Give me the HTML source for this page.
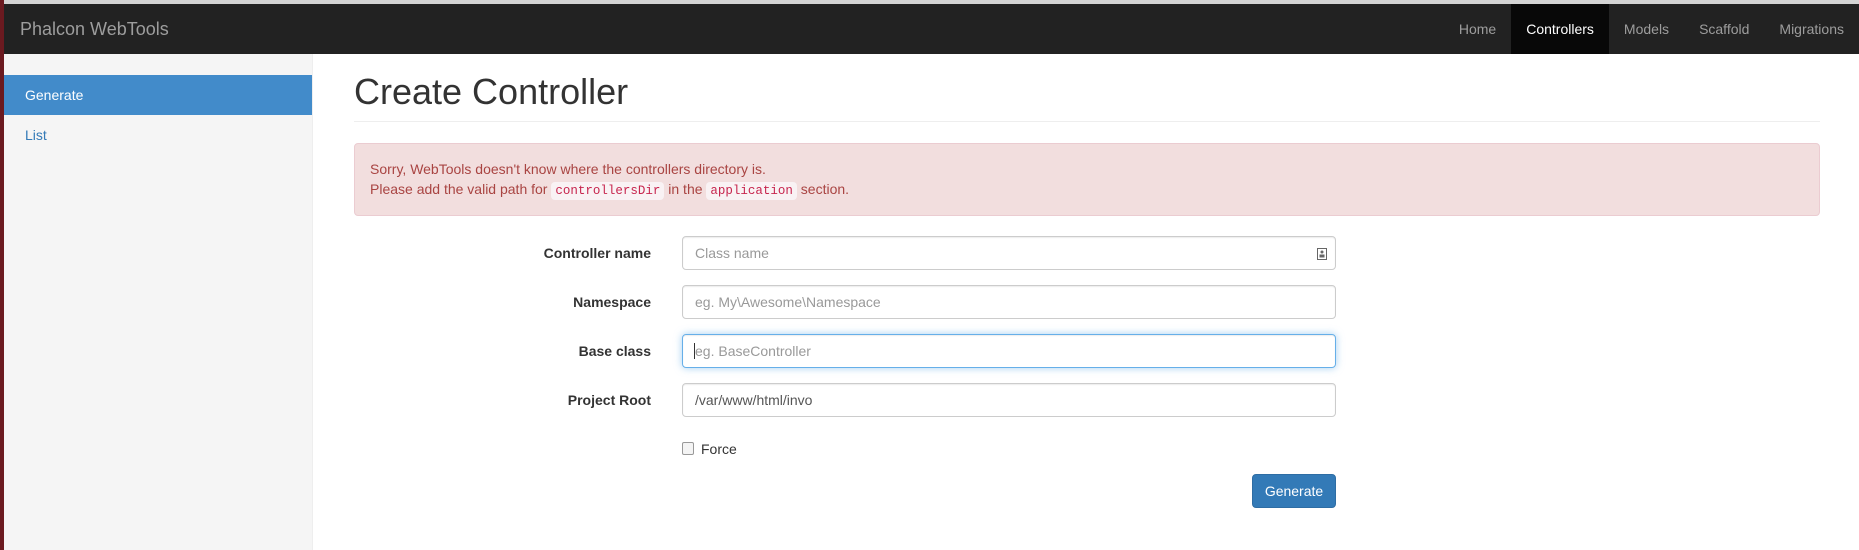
<!DOCTYPE html>
<html><head><meta charset="utf-8"><style>
*{box-sizing:border-box;margin:0;padding:0}
body{width:1859px;height:550px;overflow:hidden;background:#fff;font-family:"Liberation Sans",Arial,sans-serif;font-size:14px;color:#333;position:relative}
.top{position:absolute;left:0;top:0;width:1859px;height:4px;background:#d4d4d4}
.stripe{position:absolute;left:0;top:0;width:4px;height:550px;background:#6b1a20}
.nav{position:absolute;left:4px;top:4px;right:0;height:50px;background:#222}
.brand{position:absolute;left:16px;top:0;line-height:50px;font-size:18px;color:#9d9d9d}
.menu{position:absolute;right:0;top:0;display:flex}
.menu a{display:block;line-height:50px;padding:0 15px;color:#9d9d9d;text-decoration:none}
.menu a.act{background:#080808;color:#fff}
.side{position:absolute;left:4px;top:54px;width:309px;height:496px;background:#f5f5f5;border-right:1px solid #eee}
.side a{display:block;padding:0 21px;height:40px;line-height:40px;color:#337ab7;font-size:14px}
.side a.act{background:#428bca;color:#fff;margin-top:21px}
h1{position:absolute;left:354px;top:72px;font-size:36px;font-weight:400;color:#333;line-height:40px}
.hr{position:absolute;left:354px;top:121px;width:1466px;height:1px;background:#eee}
.alert{position:absolute;left:354px;top:143px;width:1466px;height:73px;background:#f2dede;border:1px solid #ebccd1;border-radius:4px;color:#a94442;padding:15px 15px;line-height:20px}
code{font-family:"Liberation Mono",monospace;font-size:12.5px;color:#c7254e;background:#f9f2f4;padding:2px 4px;border-radius:4px}
.lbl{position:absolute;width:300px;left:351px;text-align:right;font-weight:bold;line-height:34px}
.inp{position:absolute;left:682px;width:654px;height:34px;border:1px solid #ccc;border-radius:4px;padding:0 12px;line-height:32px;color:#999;box-shadow:inset 0 1px 1px rgba(0,0,0,.075)}
.foc{border-color:#66afe9;box-shadow:inset 0 1px 1px rgba(0,0,0,.075),0 0 8px rgba(102,175,233,.6)}
.btn{position:absolute;left:1252px;top:474px;width:84px;height:34px;background:#337ab7;border:1px solid #2e6da4;border-radius:4px;color:#fff;text-align:center;line-height:32px}
.cb{position:absolute;left:682px;top:442px;width:12px;height:13px;border:1px solid #999;border-radius:2px;background:#f4f4f4}
</style></head><body>
<div class="top"></div><div class="stripe"></div>
<div class="nav"><div class="brand">Phalcon WebTools</div>
<div class="menu"><a>Home</a><a class="act">Controllers</a><a>Models</a><a>Scaffold</a><a>Migrations</a></div></div>
<div class="side"><a class="act">Generate</a><a>List</a></div>
<h1>Create Controller</h1><div class="hr"></div>
<div class="alert">Sorry, WebTools doesn't know where the controllers directory is.<br>Please add the valid path for <code>controllersDir</code> in the <code>application</code> section.</div>
<div class="lbl" style="top:236px">Controller name</div>
<div class="inp" style="top:236px">Class name<svg style="position:absolute;right:8px;top:11px" width="10" height="12" viewBox="0 0 10 12"><rect x="0.5" y="0.5" width="9" height="11" fill="none" stroke="#666"/><circle cx="5" cy="4" r="1.5" fill="#666"/><rect x="2.5" y="6.5" width="5" height="3" fill="#666"/></svg></div>
<div class="lbl" style="top:285px">Namespace</div>
<div class="inp" style="top:285px">eg. My\Awesome\Namespace</div>
<div class="lbl" style="top:334px">Base class</div>
<div class="inp foc" style="top:334px"><span style="border-left:1px solid #333;margin-left:-1px"></span>eg. BaseController</div>
<div class="lbl" style="top:383px">Project Root</div>
<div class="inp" style="top:383px;color:#555">/var/www/html/invo</div>
<div class="cb"></div><div style="position:absolute;left:701px;top:440px;line-height:18px">Force</div>
<div class="btn">Generate</div>
</body></html>
